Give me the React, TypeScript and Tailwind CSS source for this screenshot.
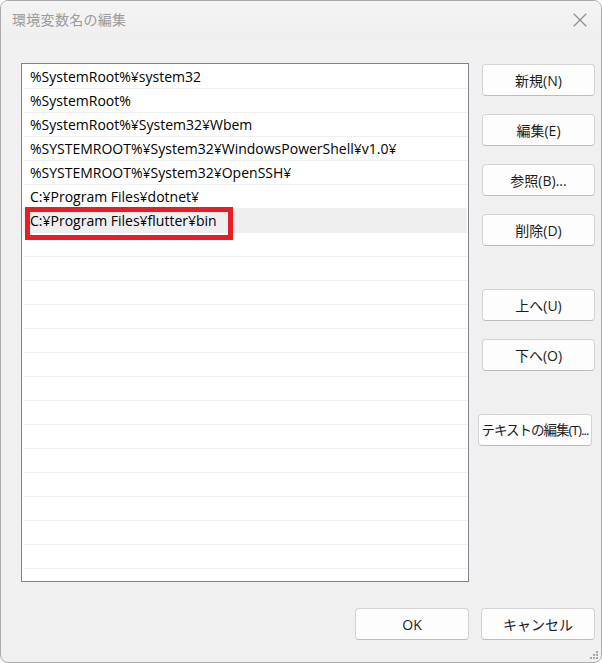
import { X } from 'lucide-react';

const paths = [
  '%SystemRoot%¥system32',
  '%SystemRoot%',
  '%SystemRoot%¥System32¥Wbem',
  '%SYSTEMROOT%¥System32¥WindowsPowerShell¥v1.0¥',
  '%SYSTEMROOT%¥System32¥OpenSSH¥',
  'C:¥Program Files¥dotnet¥',
  'C:¥Program Files¥flutter¥bin',
];

const font = { fontFamily: '"Open Sans", "Noto Sans CJK JP", sans-serif' };

function Btn({ label, className = '' }: { label: string; className?: string }) {
  return (
    <button
      className={`h-[32px] w-[113px] shrink-0 whitespace-nowrap rounded-[4px] border border-[#d3d3d3] border-b-[#bdbdbd] bg-[#fdfdfd] px-0 text-[#1b1b1b] ${className}`}
    >
      {label}
    </button>
  );
}

export default function App() {
  const rows = Array.from({ length: 22 }, (_, i) => paths[i] ?? '');

  return (
    <div className="w-[602px] h-[663px] bg-white" style={font}>
      <div className="relative flex h-full w-full flex-col rounded-[8px] border border-[#ababab] bg-[#f0f0f0] overflow-hidden">
        {/* title bar */}
        <div className="flex h-[37px] shrink-0 items-center justify-between bg-gradient-to-b from-[#f4f4f4] to-[#efefef] pl-[11px] pr-[9px]">
          <span className="text-[14px] text-[#9b9b9b] tracking-[0.3px]">環境変数名の編集</span>
          <X className="h-[24px] w-[24px] text-[#8c8c8c]" strokeWidth={1.1} />
        </div>

        <div className="mt-[25px] flex pl-[20px]">
          {/* list */}
          <div className="relative h-[519px] w-[448px] shrink-0 overflow-hidden border border-[#82828c] bg-white p-[1px]">
            {rows.map((p, i) => (
              <div
                key={i}
                className={`flex h-[24px] items-center border-b border-[#efefef] pl-[7px] text-[14px] text-black ${
                  i === 6 ? 'bg-[#efefef]' : ''
                }`}
              >
                {p}
              </div>
            ))}
            <div className="absolute left-[3px] top-[143px] h-[33px] w-[208px] border-[5px] border-[#ed1c24]" />
          </div>

          {/* buttons */}
          <div className="ml-[13px] mt-[1px] flex flex-col text-[14px]">
            <Btn label="新規(N)" />
            <Btn label="編集(E)" className="mt-[18px]" />
            <Btn label="参照(B)..." className="mt-[18px]" />
            <Btn label="削除(D)" className="mt-[18px]" />
            <Btn label="上へ(U)" className="mt-[43px]" />
            <Btn label="下へ(O)" className="mt-[18px]" />
            <Btn
              label="テキストの編集(T)..."
              className="ml-[-4px] mt-[43px] w-[114px] text-[13.5px] tracking-[-1px]"
            />
          </div>
        </div>

        {/* footer */}
        <div className="mt-[26px] flex justify-end gap-[12px] pr-[6px] text-[14px]">
          <Btn label="OK" className="w-[114px]" />
          <Btn label="キャンセル" className="w-[114px]" />
        </div>

        <svg className="absolute bottom-[2px] right-[2px]" width="10" height="10" viewBox="0 0 10 10">
          <g fill="#a6a6a6">
            <rect x="7" y="1" width="2" height="2" />
            <rect x="4" y="4" width="2" height="2" />
            <rect x="7" y="4" width="2" height="2" />
            <rect x="1" y="7" width="2" height="2" />
            <rect x="4" y="7" width="2" height="2" />
            <rect x="7" y="7" width="2" height="2" />
          </g>
        </svg>
      </div>
    </div>
  );
}
